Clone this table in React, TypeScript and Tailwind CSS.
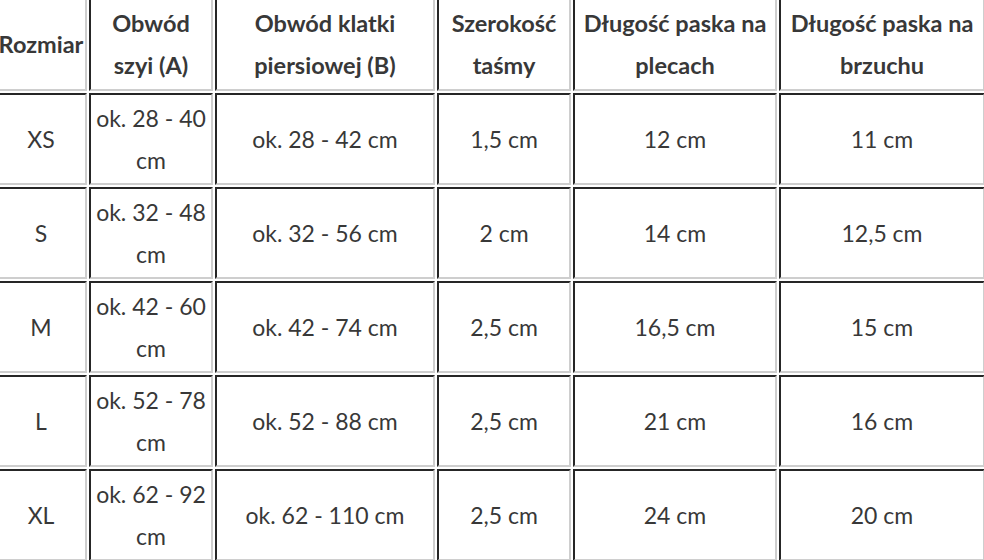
import React from 'react';

type Row = { size: string; neck: string[]; chest: string; tape: string; back: string; belly: string };

const rows: Row[] = [
  { size: 'XS', neck: ['ok. 28 - 40', 'cm'], chest: 'ok. 28 - 42 cm', tape: '1,5 cm', back: '12 cm', belly: '11 cm' },
  { size: 'S', neck: ['ok. 32 - 48', 'cm'], chest: 'ok. 32 - 56 cm', tape: '2 cm', back: '14 cm', belly: '12,5 cm' },
  { size: 'M', neck: ['ok. 42 - 60', 'cm'], chest: 'ok. 42 - 74 cm', tape: '2,5 cm', back: '16,5 cm', belly: '15 cm' },
  { size: 'L', neck: ['ok. 52 - 78', 'cm'], chest: 'ok. 52 - 88 cm', tape: '2,5 cm', back: '21 cm', belly: '16 cm' },
  { size: 'XL', neck: ['ok. 62 - 92', 'cm'], chest: 'ok. 62 - 110 cm', tape: '2,5 cm', back: '24 cm', belly: '20 cm' },
];

const headers: string[][] = [
  ['Rozmiar'],
  ['Obwód', 'szyi (A)'],
  ['Obwód klatki', 'piersiowej (B)'],
  ['Szerokość', 'taśmy'],
  ['Długość paska na', 'plecach'],
  ['Długość paska na', 'brzuchu'],
];

function Cell({ lines, head }: { lines: string[]; head?: boolean }) {
  return (
    <div
      className={`flex flex-col items-center justify-center border-2 border-t-[#262626] border-l-[#262626] border-r-[#cecece] border-b-[#cecece] text-center whitespace-nowrap leading-[42px] ${
        head ? 'h-[94px] font-bold text-[23.5px] text-[#383838]' : 'h-[92px] text-[23px] text-[#383838]'
      }`}
    >
      {lines.map((l, i) => (
        <span key={i}>{l}</span>
      ))}
    </div>
  );
}

export default function App() {
  return (
    <div className="w-[984px] h-[560px] overflow-hidden bg-white" style={{ fontFamily: 'Lato, "Open Sans", sans-serif' }}>
      <div className="grid grid-cols-[92px_124px_220px_134px_204px_206px] gap-[2px] ml-[-5px] mt-[-3px]">
        {headers.map((h, i) => (
          <Cell key={i} lines={h} head />
        ))}
        {rows.map((r) => (
          <React.Fragment key={r.size}>
            <Cell lines={[r.size]} />
            <Cell lines={r.neck} />
            <Cell lines={[r.chest]} />
            <Cell lines={[r.tape]} />
            <Cell lines={[r.back]} />
            <Cell lines={[r.belly]} />
          </React.Fragment>
        ))}
      </div>
    </div>
  );
}
